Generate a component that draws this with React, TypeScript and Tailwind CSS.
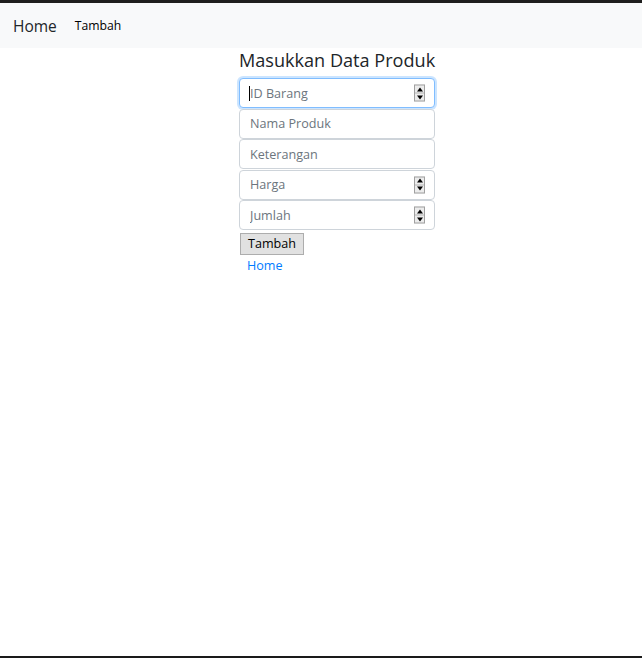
import React from 'react'

const fields = [
    { placeholder: "ID Barang", spinner: true, focus: true },
    { placeholder: "Nama Produk", spinner: false, focus: false },
    { placeholder: "Keterangan", spinner: false, focus: false },
    { placeholder: "Harga", spinner: true, focus: false },
    { placeholder: "Jumlah", spinner: true, focus: false },
]

function Spinner() {
    return (
        <div className="absolute right-[10px] top-1/2 -translate-y-1/2 w-[11px] h-[17px] border border-[#a0a0a0] bg-[#ececec] flex flex-col">
            <div className="flex-1 flex items-center justify-center border-b border-[#b5b5b5]">
                <div className="w-0 h-0 border-l-[3px] border-r-[3px] border-b-[4px] border-l-transparent border-r-transparent border-b-black" />
            </div>
            <div className="flex-1 flex items-center justify-center">
                <div className="w-0 h-0 border-l-[3px] border-r-[3px] border-t-[4px] border-l-transparent border-r-transparent border-t-black" />
            </div>
        </div>
    )
}

export default function App() {
    return (
        <div className="h-screen flex flex-col bg-white border-t-[3px] border-t-[#1e1e1e] border-b-2 border-b-[#1a1a1a]" style={{ fontFamily: '"Open Sans", "Noto Sans", sans-serif' }}>
            {/* Navbar */}
            <nav className="h-[45px] bg-[#f8f9fa] flex items-center px-[13px] pt-[2px] gap-[18px]">
                <a href="#" className="text-[15.5px] text-[#212529]">Home</a>
                <a href="#" className="text-[12.2px] text-black">Tambah</a>
            </nav>

            {/* Form */}
            <div className="pl-[239px]">
                <div className="w-[196px] flex flex-col">
                    <h2 className="text-[18.1px] text-[#212529] leading-[25px] mb-[5px] whitespace-nowrap">Masukkan Data Produk</h2>
                    <div className="flex flex-col gap-[0.5px]">
                        {fields.map((f, i) => (
                            <div key={i} className="relative">
                                <input
                                    type="text"
                                    placeholder={f.placeholder}
                                    className={`w-full h-[30px] rounded-[4px] px-[10px] text-[12.6px] bg-white outline-none placeholder:text-[#6c757d] ${f.focus ? 'border border-[#80bdff] shadow-[0_0_0_2px_rgba(0,123,255,0.2)]' : 'border border-[#ced4da]'}`}
                                />
                                {f.focus && <div className="absolute left-[10px] top-[8px] w-px h-[15px] bg-black" />}
                                {f.spinner && <Spinner />}
                            </div>
                        ))}
                    </div>
                    <div>
                        <button className="h-[22px] ml-px px-[7px] text-[12.6px] text-black bg-[#e1e1e1] border border-[#adadad] leading-none">Tambah</button>
                    </div>
                    <a href="#" className="text-[12.6px] text-[#007bff] ml-[8px] mt-[2px]">Home</a>
                </div>
            </div>
        </div>
    )
}
